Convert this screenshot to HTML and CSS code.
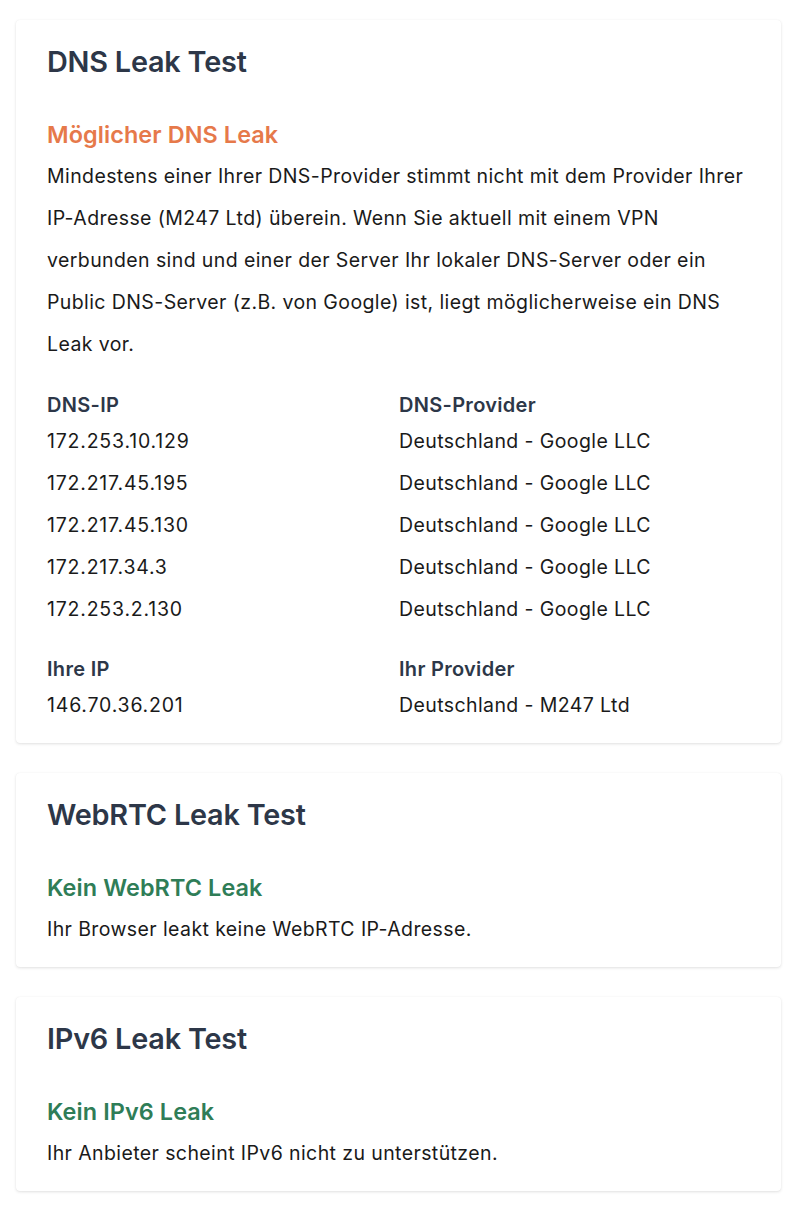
FILE: index.html
```html
<!DOCTYPE html>
<html lang="de">
<head>
<meta charset="utf-8">
<title>Leak Test</title>
<link rel="stylesheet" href="styles.css">
</head>
<body>
<main class="page">
  <section class="card">
    <h2 class="card-title">DNS Leak Test</h2>
    <h3 class="status status-warn">Möglicher DNS Leak</h3>
    <p class="text">Mindestens einer Ihrer DNS-Provider stimmt nicht mit dem Provider Ihrer IP-Adresse (M247 Ltd) überein. Wenn Sie aktuell mit einem VPN verbunden sind und einer der Server Ihr lokaler DNS-Server oder ein Public DNS-Server (z.B. von Google) ist, liegt möglicherweise ein DNS Leak vor.</p>
    <div class="table">
      <div class="th">DNS-IP</div><div class="th">DNS-Provider</div>
      <div class="td ip">172.253.10.129</div><div class="td">Deutschland - Google LLC</div>
      <div class="td ip">172.217.45.195</div><div class="td">Deutschland - Google LLC</div>
      <div class="td ip">172.217.45.130</div><div class="td">Deutschland - Google LLC</div>
      <div class="td ip">172.217.34.3</div><div class="td">Deutschland - Google LLC</div>
      <div class="td ip">172.253.2.130</div><div class="td">Deutschland - Google LLC</div>
    </div>
    <div class="table">
      <div class="th">Ihre IP</div><div class="th">Ihr Provider</div>
      <div class="td ip">146.70.36.201</div><div class="td">Deutschland - M247 Ltd</div>
    </div>
  </section>
  <section class="card">
    <h2 class="card-title">WebRTC Leak Test</h2>
    <h3 class="status status-ok">Kein WebRTC Leak</h3>
    <p class="text">Ihr Browser leakt keine WebRTC IP-Adresse.</p>
  </section>
  <section class="card">
    <h2 class="card-title">IPv6 Leak Test</h2>
    <h3 class="status status-ok">Kein IPv6 Leak</h3>
    <p class="text">Ihr Anbieter scheint IPv6 nicht zu unterstützen.</p>
  </section>
</main>
</body>
</html>
```
FILE: styles.css
```css
html, body {
  margin: 0;
  padding: 0;
  background: #ffffff;
}
body {
  font-family: Inter, "Noto Sans", "Liberation Sans", sans-serif;
  color: #1a202c;
}
.page {
  display: flex;
  flex-direction: column;
  gap: 30px;
  padding: 20px 19px 19px 16px;
}
.card {
  background: #fff;
  border-radius: 4px;
  box-shadow: 0 1px 3px rgba(0,0,0,0.12), 0 0 1px rgba(0,0,0,0.06);
  padding: 22px 30px 17px 31px;
}
.card-title {
  margin: 0;
  font-size: 28.8px;
  line-height: 40px;
  font-weight: 600;
  color: #2d3748;
  letter-spacing: -0.2px;
}
.status {
  margin: 33px 0 0;
  font-size: 23.4px;
  line-height: 40px;
  font-weight: 600;
  letter-spacing: 0.1px;
}
.status-warn { color: #e6794a; }
.status-ok { color: #2f7d57; }
.text {
  margin: 0;
  font-size: 19.5px;
  line-height: 42px;
  letter-spacing: 0.4px;
  color: #1a1a1a;
}
.table {
  display: grid;
  grid-template-columns: 352px 1fr;
  margin-top: 25px;
}
.table + .table { margin-top: 24px; }
.th {
  font-size: 20px;
  line-height: 30px;
  font-weight: 600;
  letter-spacing: 0.3px;
  color: #2d3748;
}
.td {
  font-size: 19.5px;
  line-height: 42px;
  letter-spacing: 0.4px;
  color: #1a1a1a;
}
.ip {
  letter-spacing: 0.8px;
}
```
